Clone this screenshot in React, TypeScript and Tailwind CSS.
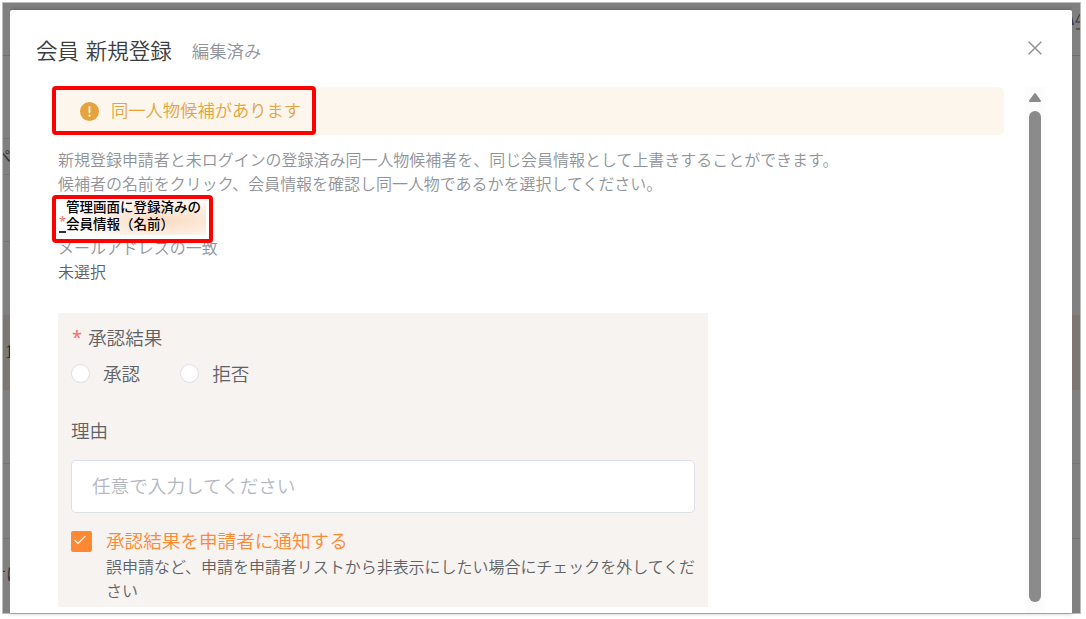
function BackgroundLeft() {
  return (
    <div className="relative w-[7px] shrink-0 overflow-hidden bg-[#808080] font-normal">
      <div className="absolute top-[52px] h-px w-full bg-[#6e6e6e]" />
      <div className="absolute top-[135px] h-px w-full bg-[#757575]" />
      <div className="absolute top-[142px] -left-[8px] text-[16px] leading-5 text-[#303133]">ペ</div>
      <div className="absolute top-[171px] h-px w-full bg-[#757575]" />
      <div className="absolute top-[238px] h-px w-full bg-[#757575]" />
      <div className="absolute top-[312px] h-[75px] w-full bg-[#7d7672]" />
      <div className="absolute top-[339px] left-[2px] font-['Liberation_Serif',serif] text-[18px] leading-5 text-[#2b1c12]">1</div>
      <div className="absolute top-[460px] h-px w-full bg-[#757575]" />
      <div className="absolute top-[535px] h-px w-full bg-[#757575]" />
      <div className="absolute top-[560px] -left-[13px] w-10 text-[16px] leading-5 text-[#303133]">せに</div>
    </div>
  );
}

function BackgroundRight() {
  return (
    <div className="relative w-2 shrink-0 overflow-hidden bg-[#808080]">
      <svg className="absolute top-[9px] left-0 h-5 w-2" viewBox="0 0 8 20" fill="none">
        <path d="M0 4L2 13H0z" fill="#303b52" />
        <path d="M8 2L4 10H8M4 17H8" stroke="#4a4541" strokeWidth="1.4" />
      </svg>
      <div className="absolute top-[52px] h-px w-full bg-[#6e6e6e]" />
      <div className="absolute top-[312px] h-[75px] w-full bg-[#7d7672]" />
      <div className="absolute top-[460px] h-px w-full bg-[#757575]" />
      <div className="absolute top-[535px] h-px w-full bg-[#757575]" />
    </div>
  );
}

function Scrollbar() {
  return (
    <div className="flex w-5 shrink-0 flex-col items-center bg-[#fcfcfc] pt-[5px]">
      <svg className="h-[11px] w-[14px]" viewBox="0 0 14 11">
        <path d="M7 2L12 9H2z" fill="#8b8b8b" stroke="#8b8b8b" strokeWidth="2" strokeLinejoin="round" />
      </svg>
      <div className="mt-2 h-[491px] w-[12px] rounded-full bg-[#8b8b8b]" />
    </div>
  );
}

function ApprovalForm() {
  return (
    <div className="mt-[30px] h-[294px] w-[650px] bg-[#f7f3f1] pt-[10px] pl-[13px] text-[18.6px] leading-7 text-[#606266]">
      <div className="flex">
        <span className="w-[17px] pl-px font-['Noto_Sans',sans-serif] text-[18px] font-normal text-[#f56c6c]">*</span>
        <span>承認結果</span>
      </div>
      <div className="mt-2 flex items-center">
        <label className="flex items-center gap-[13px]">
          <span className="h-[19px] w-[19px] rounded-full border border-[#dcdfe6] bg-white" />
          承認
        </label>
        <label className="ml-10 flex items-center gap-[13px]">
          <span className="h-[19px] w-[19px] rounded-full border border-[#dcdfe6] bg-white" />
          拒否
        </label>
      </div>
      <div className="mt-[29px]">理由</div>
      <div className="mt-[16px] flex h-[53px] w-[624px] items-center rounded-[5px] border border-[#dcdfe6] bg-white px-5 pb-1 text-[#b4b8c1]">
        任意で入力してください
      </div>
      <div className="mt-[14px] flex items-center gap-[14px] text-[#ff8833]">
        <span className="flex h-[21px] w-[21px] items-center justify-center rounded-[2px] bg-[#ff8833]">
          <svg className="h-[21px] w-[21px]" viewBox="0 0 21 21" fill="none">
            <path d="M3.5 9L7 12.5L14.3 5.2" stroke="#fff" strokeWidth="1.1" />
          </svg>
        </span>
        <span className="-mt-px mb-px">承認結果を申請者に通知する</span>
      </div>
      <p className="-mt-px w-[630px] pl-[35px] text-[15.97px] leading-6">
        誤申請など、申請を申請者リストから非表示にしたい場合にチェックを外してくだ
        <br />
        さい
      </p>
    </div>
  );
}

export default function App() {
  return (
    <div className="h-[619px] w-[1086px] overflow-hidden bg-white pt-[2px] pl-[2px] font-['Noto_Sans_CJK_JP',sans-serif] font-[350]">
      <div className="flex h-[612px] w-[1079px] flex-col border border-[#bdbdbd]">
        <div className="h-[7px] shrink-0 bg-[#808080]" />
        <div className="flex min-h-0 flex-1 bg-[#808080]">
          <div className="-mt-[7px] flex">
            <BackgroundLeft />
          </div>

          {/* Dialog */}
          <div className="flex w-[1062px] shrink-0 flex-col rounded-t-[2px] bg-white shadow-[0_0_4px_rgba(0,0,0,0.35)]">
            <header className="flex h-[77px] shrink-0 items-start pl-[26px]">
              <h1 className="mt-[24px] text-[21.5px] leading-8 [word-spacing:2px] text-[#3c3d40]">会員 新規登録</h1>
              <span className="mt-[25px] ml-[20px] text-[17.4px] leading-8 text-[#909399]">編集済み</span>
              <svg className="mt-[31px] mr-[30px] ml-auto h-[14px] w-[14px]" viewBox="0 0 14 14" fill="none">
                <path d="M0.7 0.7L13.3 13.3M13.3 0.7L0.7 13.3" stroke="#8b8e94" strokeWidth="1.4" />
              </svg>
            </header>

            <div className="flex min-h-0 flex-1">
              <main className="ml-12 w-[946px] shrink-0">
                <div className="relative flex h-12 items-center rounded-[5px] bg-[#fdf6ec] pl-[22px] text-[17.3px] text-[#e6a23c]">
                  <svg className="mr-3 h-[19px] w-[19px]" viewBox="0 0 19 19">
                    <circle cx="9.5" cy="9.5" r="9.5" fill="#e6a23c" />
                    <path d="M9.5 5V10.3" stroke="#fff" strokeWidth="1.8" strokeLinecap="round" />
                    <circle cx="9.5" cy="13.7" r="1.1" fill="#fff" />
                  </svg>
                  <span className="pb-[2px]">同一人物候補があります</span>
                  <div className="absolute -top-px -left-[6px] h-[49px] w-[264px] rounded-[4px] border-4 border-[#ff0000]" />
                </div>

                <p className="mt-3 text-[15.97px] leading-6 text-[#909399]">
                  新規登録申請者と未ログインの登録済み同一人物候補者を、同じ会員情報として上書きすることができます。
                  <br />
                  候補者の名前をクリック、会員情報を確認し同一人物であるかを選択してください。
                </p>

                {/* Candidate name */}
                <div className="relative z-10 -ml-[6px] flex h-[48px] w-[161px] rounded-[4px] border-4 border-[#ff0000] bg-white pl-[3px]">
                  <div className="w-[7px] shrink-0 pt-[12px]">
                    <div className="h-[20px] font-['Noto_Sans',sans-serif] text-[13px] leading-[20px] font-normal text-[#f56c6c]">*</div>
                    <div className="h-[2px] w-[7px] bg-[#303133]" />
                  </div>
                  <div className="h-[36px] w-[140px] bg-[radial-gradient(ellipse_at_70%_60%,#fbdcc2_0%,#fdeee2_45%,#ffffff_75%)] text-[13.5px] leading-[17px] font-medium whitespace-nowrap text-black">
                    <div className="-mt-px">
                      管理画面に登録済みの
                      <br />
                      会員情報（名前）
                    </div>
                  </div>
                </div>
                <p className="-mt-2 text-[15.97px] leading-6 text-[#909399]">メールアドレスの一致</p>
                <p className="text-[15.97px] leading-6 text-[#606266]">未選択</p>

                <ApprovalForm />
              </main>
              <div className="ml-[21px] flex">
                <Scrollbar />
              </div>
            </div>
          </div>

          <div className="-mt-[7px] flex">
            <BackgroundRight />
          </div>
        </div>
      </div>
    </div>
  );
}
